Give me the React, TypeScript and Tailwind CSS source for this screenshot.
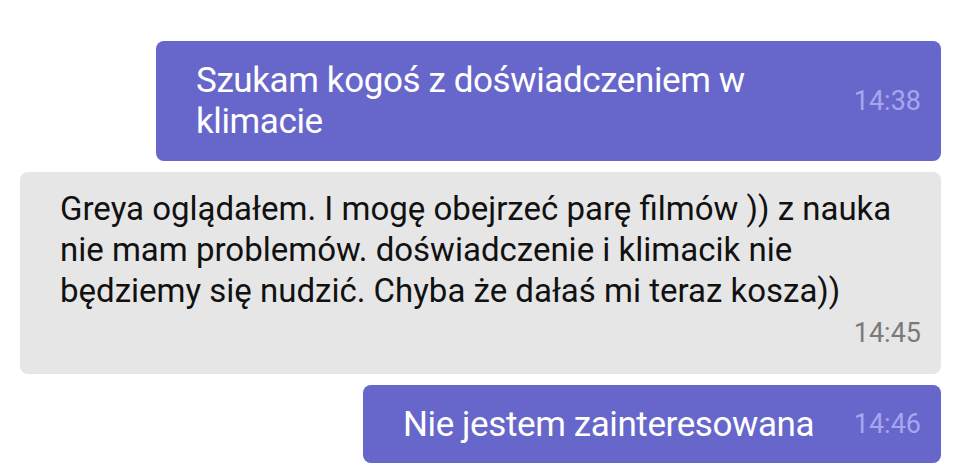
export default function App() {
  const font = { fontFamily: "Roboto, 'Noto Sans', sans-serif" };
  return (
    <div className="w-[960px] h-[471px] bg-white overflow-hidden flex flex-col" style={font}>
      <div className="h-[41px]" />
      <div className="flex justify-end pr-[19px]">
        <div className="w-[785px] h-[120px] bg-[#6767cb] rounded-[8px] flex items-center pl-[40px] pr-[20px]">
          <div className="flex-1 text-white text-[35px] leading-[41px] tracking-[-0.4px]">
            Szukam kogoś z doświadczeniem w<br />klimacie
          </div>
          <div className="text-[#a6a6ee] text-[27px] leading-none">14:38</div>
        </div>
      </div>
      <div className="h-[11px]" />
      <div className="flex pl-[20px] pr-[19px]">
        <div className="w-[921px] h-[202px] bg-[#e6e6e6] rounded-[8px] flex flex-col pl-[40px] pr-[20px] pt-[16px]">
          <div className="text-[#111111] text-[33px] leading-[41px]">
            Greya oglądałem. I mogę obejrzeć parę filmów )) z nauka<br />
            nie mam problemów. doświadczenie i klimacik nie<br />
            będziemy się nudzić. Chyba że dałaś mi teraz kosza))
          </div>
          <div className="text-right text-[#7a7a7a] text-[27px] leading-none mt-[9px]">14:45</div>
        </div>
      </div>
      <div className="h-[11px]" />
      <div className="flex justify-end pr-[19px]">
        <div className="w-[578px] h-[78px] bg-[#6767cb] rounded-[8px] flex items-center pl-[40px] pr-[20px]">
          <div className="flex-1 text-white text-[35px] leading-[41px] tracking-[-0.4px]">Nie jestem zainteresowana</div>
          <div className="text-[#a6a6ee] text-[27px] leading-none">14:46</div>
        </div>
      </div>
    </div>
  );
}
